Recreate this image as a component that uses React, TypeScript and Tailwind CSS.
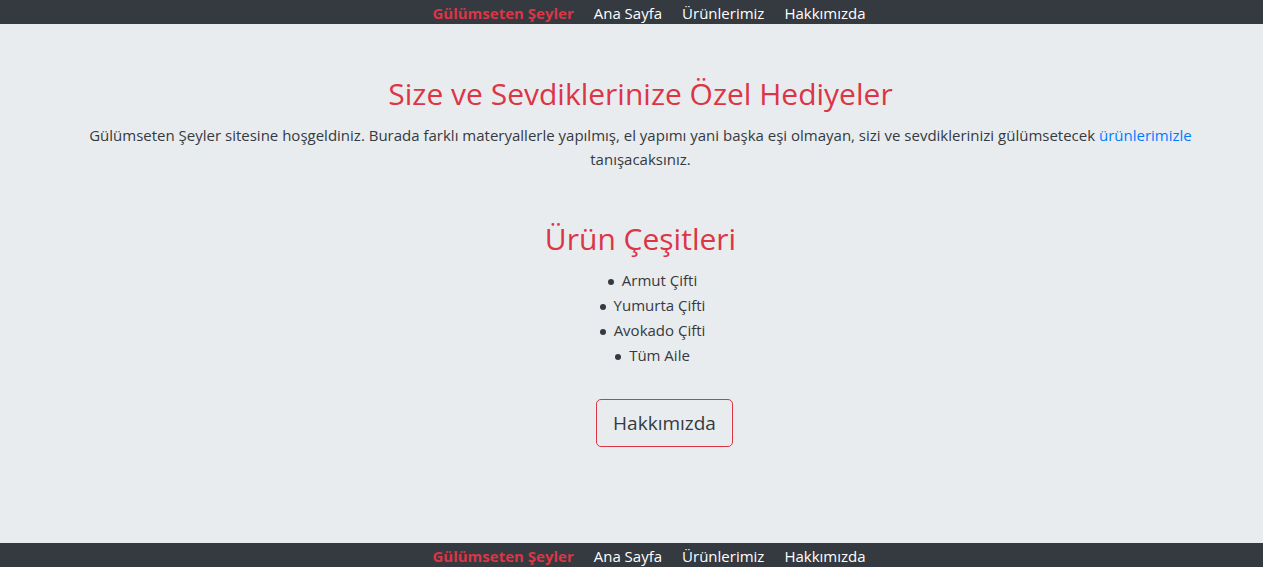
const links = ["Ana Sayfa", "Ürünlerimiz", "Hakkımızda"];

function Bar({ label }: { label: string }) {
  return (
    <nav aria-label={label} className="flex h-6 items-center justify-center gap-5 bg-[#343a40] pl-[35px] pt-0.5 text-white">
      <a href="#" className="font-bold text-[#dc3545]">Gülümseten Şeyler</a>
      {links.map((text) => (
        <a key={text} href="#">{text}</a>
      ))}
    </nav>
  );
}

const products = ["Armut Çifti", "Yumurta Çifti", "Avokado Çifti", "Tüm Aile"];

export default function App() {
  return (
    <div className="flex min-h-screen flex-col bg-[#e9ecef] font-['Open_Sans','Noto_Sans',sans-serif] text-[15px] leading-6 text-[#343a40]">
      <header><Bar label="Üst menü" /></header>
      <main className="flex grow flex-col items-center pl-[18px] pt-[50px] text-center">
        <h1 className="mb-[9px] text-[30px] leading-10 text-[#dc3545]">Size ve Sevdiklerinize Özel Hediyeler</h1>
        <p className="max-w-[1110px]">
          Gülümseten Şeyler sitesine hoşgeldiniz. Burada farklı materyallerle yapılmış, el yapımı yani başka eşi olmayan, sizi ve sevdiklerinizi gülümsetecek <a href="#" className="text-[#007bff]">ürünlerimizle</a> tanışacaksınız.
        </p>
        <h2 className="mb-[9px] mt-12 text-[30px] leading-10 text-[#dc3545]">Ürün Çeşitleri</h2>
        <ul className="pl-6 leading-[25px]">
          {products.map((text) => (
            <li key={text} className="flex items-center justify-center gap-2 before:mt-0.5 before:size-1.5 before:rounded-full before:bg-[#343a40]">{text}</li>
          ))}
        </ul>
        <a href="#" className="ml-12 mt-[31px] rounded-[5px] border border-[#dc3545] px-4 py-2 text-[19px] leading-[30px]">Hakkımızda</a>
      </main>
      <footer><Bar label="Alt menü" /></footer>
    </div>
  );
}
